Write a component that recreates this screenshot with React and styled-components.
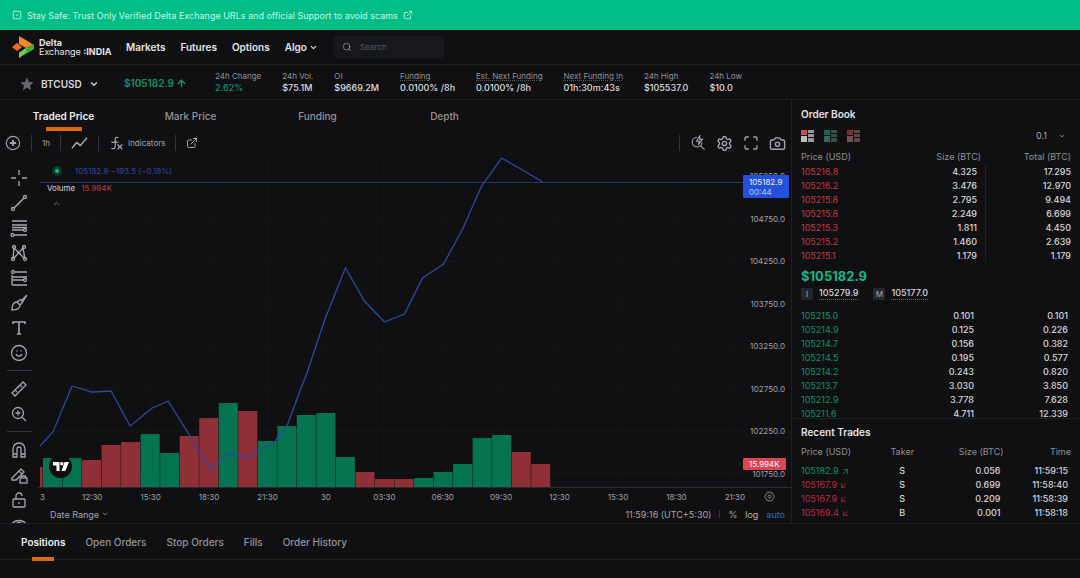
import React from "react";
import styled, { createGlobalStyle, css } from "styled-components";
import {
  ArrowDownLeft,
  ArrowUp,
  ArrowUpRight,
  Camera,
  ChevronDown,
  ChevronUp,
  ExternalLink,
  Maximize,
  Search,
  Settings,
  SquareCheck,
} from "lucide-react";

const GlobalStyle = createGlobalStyle`
  * {
    box-sizing: border-box;
  }
  body {
    margin: 0;
    background: #101013;
    color: #d6d6d8;
    font-family: Inter, "Liberation Sans", sans-serif;
    font-size: 10px;
  }
  button, input, select {
    font: inherit;
    color: inherit;
    background: none;
    border: 0;
    padding: 0;
    margin: 0;
  }
  svg {
    flex: none;
  }
`;

const line = "#1f2024";
const green = "#0a9467";
const red = "#c23a42";

const Page = styled.div`
  min-height: 100vh;
  display: flex;
  flex-direction: column;
`;

const Banner = styled.a`
  display: flex;
  align-items: center;
  gap: 5px;
  height: 30px;
  padding: 0 12px;
  background: #02bd85;
  color: #c9f5e6;
  font-size: 9px;
  text-decoration: none;
  white-space: nowrap;
`;

const Header = styled.header`
  display: flex;
  align-items: center;
  height: 35px;
  padding: 0 12px;
  border-bottom: 1px solid ${line};
`;

const Brand = styled.a`
  display: flex;
  align-items: center;
  gap: 5px;
  width: 114px;
  color: #e4e4e6;
  font-size: 9px;
  line-height: 9px;
  text-decoration: none;
  white-space: nowrap;
`;

const BrandName = styled.span`
  display: grid;
`;

const Nav = styled.nav`
  display: flex;
  align-items: center;
  gap: 15px;
`;

const NavLink = styled.a`
  display: flex;
  align-items: center;
  gap: 2px;
  color: #e4e4e6;
  font-weight: 600;
  text-decoration: none;
`;

const SearchBox = styled.label`
  display: flex;
  align-items: center;
  gap: 8px;
  width: 110px;
  height: 22px;
  margin-left: 16px;
  padding: 0 8px;
  border-radius: 2px;
  background: #17181d;
  color: #8d8e93;

  input {
    width: 100%;
    min-width: 0;
    font-size: 8px;
    outline: none;
  }
  input::placeholder {
    color: #55565c;
  }
`;

const Ticker = styled.section`
  display: flex;
  align-items: center;
  height: 35px;
  padding-left: 20px;
  border-bottom: 1px solid ${line};
  white-space: nowrap;
`;

const Symbol = styled.button`
  display: flex;
  align-items: center;
  gap: 7px;
  width: 104px;
  padding-top: 3px;
  font-weight: 600;
`;

const LastPrice = styled.div`
  display: flex;
  align-items: center;
  gap: 2px;
  width: 91px;
  padding-top: 2px;
  color: ${green};
  font-weight: 600;
`;

const Stats = styled.dl`
  display: flex;
  gap: 21px;
  margin: 0;
`;

const Stat = styled.div`
  dt {
    color: #8f9095;
    font-size: 8px;
    line-height: 11px;
    ${(props) => props.$hint && css`text-decoration: underline dotted #5b5c61;`}
  }
  dd {
    margin: 0;
    color: ${(props) => (props.$up ? green : "#dededf")};
    font-size: 9px;
    font-weight: 500;
    line-height: 12px;
  }
`;

const Main = styled.main`
  display: grid;
  grid-template-columns: minmax(0, 1fr) 289px;
  height: 424px;
  border-bottom: 1px solid ${line};
`;

const ChartPanel = styled.section`
  display: flex;
  flex-direction: column;
  min-height: 0;
`;

const Tabs = styled.div`
  display: flex;
  height: 31px;
`;

const Tab = styled.button`
  position: relative;
  width: ${(props) => (props.$fixed ? "127px" : "auto")};
  color: ${(props) => (props.$active ? "#eeeeef" : "#929398")};
  font-weight: ${(props) => (props.$active ? 600 : 500)};
  white-space: nowrap;

  ${(props) =>
    props.$active &&
    css`
      &::after {
        content: "";
        position: absolute;
        left: 50%;
        bottom: ${props.$fixed ? "0" : "-2px"};
        width: ${props.$fixed ? "36px" : "22px"};
        height: 4px;
        transform: translateX(-50%);
        background: #dc6c14;
      }
    `}
`;

const ChartBar = styled.div`
  display: flex;
  align-items: center;
  justify-content: space-between;
  height: 24px;
  padding: 0 5px;
`;

const BarGroup = styled.div`
  display: flex;
  align-items: center;
  gap: ${(props) => props.$gap};
`;

const BarButton = styled.button`
  display: flex;
  align-items: center;
  gap: 5px;
  color: #a5a6aa;
  font-size: 8px;
`;

const Divider = styled.span`
  width: 1px;
  height: ${(props) => (props.$short ? "8px" : "16px")};
  background: #34353a;
`;

const ChartBody = styled.div`
  display: flex;
  flex: 1;
  min-height: 0;
`;

const Tools = styled.div`
  display: flex;
  flex-direction: column;
  width: 38px;
  padding-top: 10px;
  overflow: hidden;
  color: #a5a6aa;
`;

const Tool = styled.button`
  display: flex;
  flex: none;
  align-items: center;
  justify-content: center;
  height: 25px;
`;

const ToolRule = styled.hr`
  flex: none;
  width: 25px;
  height: 1px;
  margin: 5px auto;
  border: 0;
  background: #37383d;
`;

const ChartArea = styled.div`
  display: flex;
  flex: 1;
  flex-direction: column;
  min-width: 0;
`;

const PlotRow = styled.div`
  position: relative;
  display: flex;
  flex: 1;
  min-height: 0;
  padding-left: 2px;
`;

const Plot = styled.svg`
  flex: 1;
  min-width: 0;
  width: 100%;
  height: 100%;
`;

const Legend = styled.div`
  position: absolute;
  top: 10px;
  left: 9px;
  display: grid;
  gap: 5px;
  font-size: 8px;
  line-height: 12px;
`;

const LegendRow = styled.div`
  display: flex;
  align-items: center;
  gap: ${(props) => props.$gap};
  padding-left: ${(props) => props.$indent || 0};
  color: ${(props) => props.$color || "#d6d6d8"};
`;

const VolumeValue = styled.span`
  color: ${red};
`;

const LiveDot = styled.span`
  width: 10px;
  height: 10px;
  border: 3px solid #0b3b2d;
  border-radius: 50%;
  background: #23b585;
`;

const TvBadge = styled.a`
  position: absolute;
  left: 11px;
  bottom: 9px;
  display: grid;
  place-items: center;
  width: 23px;
  height: 23px;
  border-radius: 50%;
  background: #0e0e11;
`;

const PriceAxis = styled.div`
  display: flex;
  flex-direction: column;
  width: 47px;
  color: #a0a1a5;
  font-size: 8px;
  line-height: 10px;
`;

const PriceMark = styled.div`
  flex: 1;
  padding: 16px 6px 0 0;
  text-align: right;

  &:last-child {
    flex: 0.7;
  }
`;

const PriceTag = styled.div`
  position: absolute;
  right: ${(props) => (props.$wide ? "2px" : "5px")};
  top: ${(props) => props.$top};
  width: ${(props) => (props.$wide ? "46px" : "43px")};
  padding: ${(props) => (props.$wide ? "2px 0 1px 6px" : "1px 0 1px 6px")};
  border-radius: 1px;
  background: ${(props) => props.$color};
  color: #f2f4ff;
  font-size: 8px;
  line-height: 10px;

  small {
    display: block;
    color: #b9c6ff;
    font-size: 8px;
  }
`;

const TimeAxis = styled.div`
  display: flex;
  align-items: center;
  height: 18px;
  border-top: 1px solid #2a2b30;
  color: #a0a1a5;
  font-size: 8px;
  text-align: center;

  span {
    flex: 1;
  }
  span:first-child {
    flex: 0 0 25px;
    padding-left: 2px;
    text-align: left;
  }
  button {
    display: flex;
    width: 27px;
  }
`;

const ChartFooter = styled.div`
  display: flex;
  align-items: center;
  justify-content: space-between;
  height: 18px;
  padding: 0 6px 0 12px;
  color: #a5a6aa;
  font-size: 9px;
`;

const FooterButton = styled.button`
  display: flex;
  align-items: center;
  gap: 2px;
  color: ${(props) => props.$color || "inherit"};
`;

const Side = styled.aside`
  display: flex;
  flex-direction: column;
  min-height: 0;
  border-left: 1px solid ${line};
`;

const Book = styled.section`
  height: 319px;
  padding: 6px 9px 0;
  overflow: hidden;
  border-bottom: 1px solid ${line};
`;

const Trades = styled.section`
  padding: 5px 9px 0;
`;

const Title = styled.h2`
  margin: 0;
  color: #e4e4e6;
  font-size: 10px;
  font-weight: 600;
  line-height: 16px;
`;

const BookTools = styled.div`
  display: flex;
  align-items: center;
  gap: 10px;
  height: 27px;

  button {
    display: flex;
  }
  select {
    width: 20px;
    appearance: none;
    font-size: 9px;
  }
  label {
    display: flex;
    align-items: center;
    gap: 2px;
    margin-left: auto;
    padding-right: 5px;
    color: #a5a6aa;
  }
`;

const Table = styled.table`
  width: 100%;
  table-layout: fixed;
  border-collapse: collapse;
  font-size: 9px;
  line-height: 14px;

  th, td {
    padding: 0;
    text-align: right;
    white-space: nowrap;
  }
  th {
    height: ${(props) => (props.$trades ? "24px" : "16px")};
    color: #8f9095;
    font-weight: 400;
  }
  th:first-child, td:first-child {
    text-align: left;
  }
  th:nth-child(2) {
    ${(props) => props.$trades && css`text-align: center;`}
  }
`;

const Row = styled.tr`
  td {
    color: #d6d6d8;
    font-weight: 500;
    ${(props) => props.$inset && css`padding-right: 3px;`}
  }
  td:first-child {
    color: ${(props) => props.$color};
    font-weight: 400;
  }
  td:nth-child(2) {
    padding-right: ${(props) => (props.$inset ? "7px" : "4px")};
    ${(props) => props.$center && css`padding-right: 0; text-align: center;`}
  }
  td:nth-child(3) {
    ${(props) =>
      props.$depth &&
      css`background: linear-gradient(#2c1a1e, #2c1a1e) 4px 0 / 1px 100% no-repeat;`}
  }
`;

const Mid = styled.div`
  height: 46px;
  padding-top: 5px;

  strong {
    display: block;
    color: #14b783;
    font-size: 13px;
    line-height: 16px;
  }
`;

const Refs = styled.div`
  display: flex;
  align-items: center;
  gap: 6px;
  padding-top: 3px;
  line-height: 12px;
  font-weight: 500;

  i {
    width: 12px;
    background: #25262b;
    color: #9c9da2;
    font-size: 8px;
    font-style: normal;
    text-align: center;
  }
  span {
    margin-right: 9px;
    border-bottom: 1px dotted #6a6b70;
  }
`;

const TradePrice = styled.span`
  display: flex;
  align-items: center;
  gap: 2px;
`;

const BottomTabs = styled.div`
  display: flex;
  gap: 20px;
  height: 36px;
  padding-left: 21px;
  border-bottom: 1px solid ${line};
`;

const navItems = ["Markets", "Futures", "Options"];

const stats = [
  { label: "24h Change", value: "2.62%", up: true },
  { label: "24h Vol.", value: "$75.1M" },
  { label: "OI", value: "$9669.2M" },
  { label: "Funding", value: "0.0100% /8h", hint: true },
  { label: "Est. Next Funding", value: "0.0100% /8h", hint: true },
  { label: "Next Funding In", value: "01h:30m:43s", hint: true },
  { label: "24h High", value: "$105537.0" },
  { label: "24h Low", value: "$10.0" },
];

const chartTabs = ["Traded Price", "Mark Price", "Funding", "Depth"];

const priceMarks = [
  "105250.0", "104750.0", "104250.0", "103750.0",
  "103250.0", "102750.0", "102250.0", "101750.0",
];

const timeMarks = [
  "3", "12:30", "15:30", "18:30", "21:30", "30", "03:30",
  "06:30", "09:30", "12:30", "15:30", "18:30", "21:30",
];

// volume of each hour: bar height, and whether the price went up
const volumes = [
  [20, 0], [29, 1], [29, 1], [27, 0], [42, 0], [45, 0], [53, 1], [34, 1], [51, 0],
  [69, 0], [84, 1], [76, 0], [46, 1], [61, 1], [72, 1], [74, 1], [30, 1], [15, 0],
  [8, 0], [8, 0], [9, 1], [15, 1], [23, 1], [49, 1], [52, 1], [35, 0], [23, 0],
];

const pricePath =
  "0,291 13,277 32,231 52,237 71,236 90,271 112,253 128,246 151,283 170,314 188,298 " +
  "207,302 235,286 247,270 260,235 267,217 285,163 305,113 324,146 344,167 364,159 " +
  "382,123 403,109 422,74 441,31 461,3 480,14 502,27";

const asks = [
  ["105216.8", "4.325", "17.295"],
  ["105216.2", "3.476", "12.970"],
  ["105215.8", "2.795", "9.494"],
  ["105215.8", "2.249", "6.699"],
  ["105215.3", "1.811", "4.450"],
  ["105215.2", "1.460", "2.639"],
  ["105215.1", "1.179", "1.179"],
];

const bids = [
  ["105215.0", "0.101", "0.101"],
  ["105214.9", "0.125", "0.226"],
  ["105214.7", "0.156", "0.382"],
  ["105214.5", "0.195", "0.577"],
  ["105214.2", "0.243", "0.820"],
  ["105213.7", "3.030", "3.850"],
  ["105212.9", "3.778", "7.628"],
  ["105211.6", "4.711", "12.339"],
];

const trades = [
  { price: "105182.9", taker: "S", size: "0.056", time: "11:59:15", up: true },
  { price: "105167.9", taker: "S", size: "0.699", time: "11:58:40" },
  { price: "105167.9", taker: "S", size: "0.209", time: "11:58:39" },
  { price: "105169.4", taker: "B", size: "0.001", time: "11:58:18" },
];

const bottomTabs = ["Positions", "Open Orders", "Stop Orders", "Fills", "Order History"];

const Stroke = ({ size = 18, children }) => (
  <svg width={size} height={size} viewBox="0 0 18 18" fill="none" stroke="currentColor" strokeWidth="1.3">
    {children}
  </svg>
);

const Logo = () => (
  <svg width="22" height="22" viewBox="0 0 22 22">
    <path d="M7 0 22 9l-8 3-7-4Z" fill="#ef8a25" />
    <path d="m0 11 5-4 5 4-5 4Z" fill="#f26a21" />
    <path d="M22 9v4L7 22v-5l7-5Z" fill="#35b13f" />
    <path d="M7 17l7-5v4l-7 6Z" fill="#7ccb3f" />
  </svg>
);

const tools = [
  { name: "Crosshair", icon: <path d="M9 1v5M9 12v5M1 9h5M12 9h5" /> },
  { name: "Trend line", icon: <><path d="M4 14 14 4" strokeWidth="1.6" /><circle cx="3" cy="15" r="1.5" /><circle cx="15" cy="3" r="1.5" /></> },
  { name: "Fib retracement", icon: <><path d="M2 2h15M2 6h15M2 11h11M4 16h13M2 8.5h15" /><circle cx="15" cy="11" r="1.5" /><circle cx="2.5" cy="16" r="1.5" /></> },
  { name: "Pattern", icon: <><path d="M3 15 4 4l10 10M4 14l9-10 2 11M7 8l4 2" /><circle cx="3" cy="15" r="1.5" /><circle cx="4" cy="3" r="1.5" /><circle cx="14" cy="3" r="1.5" /><circle cx="15" cy="15" r="1.5" /></> },
  { name: "Forecast", icon: <><path d="M5 3h12M2 8h15M2 11h12M2 16h15M2 6v10" /><circle cx="3" cy="3" r="1.5" /><circle cx="15" cy="11" r="1.5" /></> },
  { name: "Brush", icon: <path d="M2 16c0-5 1-8 5-8l3 3c0 4-3 5-8 5ZM7 8l3-2h2v3l-2 2M12 6l5-5M12 9l5-8" /> },
  { name: "Text", icon: <path d="M3 5V3h12v2M9 3v12M7 15h4" strokeWidth="1.6" /> },
  { name: "Icons", icon: <><circle cx="9" cy="9" r="7.5" /><path d="M6 10c1 3 5 3 6 0M6.500 7h1M10.500 7h1" /></> },
  null,
  { name: "Measure", icon: <path d="M2 13 13 2l3 3L5 16ZM5 10l2 2M8 7l1 1M10 5l2 2" /> },
  { name: "Zoom in", icon: <><circle cx="8" cy="8" r="5.5" /><path d="m12 12 4 4M8 5.500v5M5.500 8h5" /></> },
  null,
  { name: "Magnet", icon: <path d="M3 16V8a6 6 0 0 1 12 0v8h-4V8a2 2 0 0 0-4 0v8ZM3 13h4M11 13h4" /> },
  { name: "Stay in drawing mode", icon: <><path d="M2 12 11 3l3 3-8 8H2ZM9 5l3 3" /><rect x="10" y="12" width="7" height="5" /><path d="M11.500 12v-2h4v2" /></> },
  { name: "Lock drawings", icon: <><rect x="3" y="8" width="12" height="8" rx="1" /><path d="M6 8V5a3 3 0 0 1 6 0M9 11v2" /></> },
  { name: "Hide drawings", icon: <><path d="M1 9c4-6 12-6 16 0-4 6-12 6-16 0Z" /><circle cx="9" cy="9" r="2.5" /></> },
];

const BookIcon = ({ left, right }) => (
  <svg width="13" height="12" viewBox="0 0 13 12">
    <path d="M0 0h6v5H0Z" fill={left} />
    <path d="M0 6h6v6H0Z" fill={right} />
    <path d="M7 0h6v3H7ZM7 4h6v3H7ZM7 8h6v4H7Z" fill={right} opacity=".8" />
  </svg>
);

const Chart = () => (
  <Plot viewBox="0 0 703 332" preserveAspectRatio="none" role="img" aria-label="BTCUSD price and volume">
    <g stroke="#151619">
      {[64, 106, 149, 191, 233, 276, 318].map((y) => (
        <path key={y} d={`M0 ${y}H703`} />
      ))}
      {[52, 110, 168, 227, 285, 343, 402, 460, 518, 577, 635, 694].map((x) => (
        <path key={x} d={`M${x} 0V332`} />
      ))}
    </g>
    {volumes.map(([height, up], i) => (
      <rect
        key={i}
        x={Math.max(0, i * 19.5 - 16.5)}
        y={332 - height}
        width={i === 0 ? 2.5 : 19}
        height={height}
        fill={up ? "#04734f" : "#8f2f37"}
      />
    ))}
    <path d="M0 27.500H703" stroke="#20307a" />
    <polyline points={pricePath} fill="none" stroke="#3047a0" strokeWidth="1.3" />
  </Plot>
);

const OrderBook = () => (
  <Book>
    <Title>Order Book</Title>
    <BookTools>
      <button aria-label="Asks and bids"><BookIcon left="#cf4a50" right="#b9bcbb" /></button>
      <button aria-label="Bids only"><BookIcon left="#0e6b4f" right="#3d6458" /></button>
      <button aria-label="Asks only"><BookIcon left="#7e2c38" right="#70525a" /></button>
      <label>
        <select aria-label="Price step" defaultValue="0.1">
          <option>0.1</option>
        </select>
        <ChevronDown size={8} />
      </label>
    </BookTools>
    <Table>
      <thead>
        <tr>
          <th>Price (USD)</th>
          <th>Size (BTC)</th>
          <th>Total (BTC)</th>
        </tr>
      </thead>
      <tbody>
        {asks.map(([price, size, total]) => (
          <Row key={size} $color={red} $depth>
            <td>{price}</td>
            <td>{size}</td>
            <td>{total}</td>
          </Row>
        ))}
        <tr>
          <td colSpan={3}>
            <Mid>
              <strong>$105182.9</strong>
              <Refs>
                <i>I</i>
                <span>105279.9</span>
                <i>M</i>
                <span>105177.0</span>
              </Refs>
            </Mid>
          </td>
        </tr>
        {bids.map(([price, size, total]) => (
          <Row key={price} $color={green} $inset>
            <td>{price}</td>
            <td>{size}</td>
            <td>{total}</td>
          </Row>
        ))}
      </tbody>
    </Table>
  </Book>
);

const RecentTrades = () => (
  <Trades>
    <Title>Recent Trades</Title>
    <Table $trades>
      <thead>
        <tr>
          <th>Price (USD)</th>
          <th>Taker</th>
          <th>Size (BTC)</th>
          <th>Time</th>
        </tr>
      </thead>
      <tbody>
        {trades.map((trade) => (
          <Row key={trade.time} $color={trade.up ? green : "#bd2a48"} $center $inset>
            <td>
              <TradePrice>
                {trade.price}
                {trade.up ? <ArrowUpRight size={9} /> : <ArrowDownLeft size={9} />}
              </TradePrice>
            </td>
            <td>{trade.taker}</td>
            <td>{trade.size}</td>
            <td>{trade.time}</td>
          </Row>
        ))}
      </tbody>
    </Table>
  </Trades>
);

const App = () => (
  <Page>
    <GlobalStyle />
    <Banner href="#safety">
      <SquareCheck size={10} />
      Stay Safe: Trust Only Verified Delta Exchange URLs and official Support to avoid scams
      <ExternalLink size={10} />
    </Banner>

    <Header>
      <Brand href="#home">
        <Logo />
        <BrandName>
          <b>Delta</b>
          <span>Exchange <b>:INDIA</b></span>
        </BrandName>
      </Brand>
      <Nav>
        {navItems.map((item) => (
          <NavLink key={item} href={`#${item.toLowerCase()}`}>{item}</NavLink>
        ))}
        <NavLink href="#algo">
          Algo <ChevronDown size={9} strokeWidth={3} />
        </NavLink>
      </Nav>
      <SearchBox>
        <Search size={10} />
        <input type="search" placeholder="Search" aria-label="Search" />
      </SearchBox>
    </Header>

    <Ticker>
      <Symbol>
        <svg width="14" height="14" viewBox="0 0 24 24" fill="#66676c">
          <path d="m12 1 3.300 7.400 8 .8-6 5.400 1.700 7.900-7-4-7 4 1.700-7.900-6-5.400 8-.8Z" />
        </svg>
        BTCUSD
        <ChevronDown size={10} strokeWidth={3} />
      </Symbol>
      <LastPrice>
        $105182.9 <ArrowUp size={11} strokeWidth={3} />
      </LastPrice>
      <Stats>
        {stats.map((stat) => (
          <Stat key={stat.label} $up={stat.up} $hint={stat.hint}>
            <dt>{stat.label}</dt>
            <dd>{stat.value}</dd>
          </Stat>
        ))}
      </Stats>
    </Ticker>

    <Main>
      <ChartPanel>
        <Tabs>
          {chartTabs.map((tab, i) => (
            <Tab key={tab} $fixed $active={i === 0}>{tab}</Tab>
          ))}
        </Tabs>
        <ChartBar>
          <BarGroup $gap="10px">
            <BarButton aria-label="Compare">
              <Stroke size={16}><circle cx="9" cy="9" r="7.5" /><path d="M9 5.500v7M5.500 9h7" strokeWidth="2" /></Stroke>
            </BarButton>
            <Divider />
            <BarButton>1h</BarButton>
            <Divider />
            <BarButton aria-label="Line chart">
              <Stroke size={17}><path d="m1 14 5-6 4 3 7-8" strokeWidth="1.6" /></Stroke>
            </BarButton>
            <Divider />
            <BarButton>
              <Stroke size={14}><path d="M12 2c-3-1-4 0-4 3v8c0 3-2 4-5 3M3 8h9M11 11l6 6M17 11l-6 6" strokeWidth="1.6" /></Stroke>
              Indicators
            </BarButton>
            <Divider />
            <BarButton aria-label="Open in new window"><ExternalLink size={12} /></BarButton>
          </BarGroup>
          <BarGroup $gap="10px">
            <Divider />
            <BarButton aria-label="Quick search">
              <Stroke size={16}><path d="M8 2.500a5.500 5.500 0 1 0 5.500 6M11.500 12l5 4.500M11 1 7.500 7h3l-1 4L14 5h-3Z" /></Stroke>
            </BarButton>
            <BarButton aria-label="Chart settings"><Settings size={17} /></BarButton>
            <BarButton aria-label="Fullscreen"><Maximize size={16} /></BarButton>
            <BarButton aria-label="Snapshot"><Camera size={17} /></BarButton>
          </BarGroup>
        </ChartBar>
        <ChartBody>
          <Tools>
            {tools.map((tool, i) =>
              tool ? (
                <Tool key={tool.name} aria-label={tool.name}>
                  <Stroke>{tool.icon}</Stroke>
                </Tool>
              ) : (
                <ToolRule key={i} />
              )
            )}
          </Tools>
          <ChartArea>
            <PlotRow>
              <Chart />
              <PriceAxis>
                {priceMarks.map((mark) => (
                  <PriceMark key={mark}>{mark}</PriceMark>
                ))}
              </PriceAxis>
              <Legend>
                <LegendRow $gap="13px" $indent="5px" $color="#2b47a8">
                  <LiveDot /> 105182.9 −193.5 (−0.18%)
                </LegendRow>
                <LegendRow $gap="6px">
                  Volume <VolumeValue>15.994K</VolumeValue>
                </LegendRow>
                <LegendRow $indent="5px" $color="#8f9095">
                  <ChevronUp size={9} />
                </LegendRow>
              </Legend>
              <PriceTag $wide $top="20px" $color="#2450dc">
                105182.9
                <small>00:44</small>
              </PriceTag>
              <PriceTag $top="303px" $color="#d94550">15.994K</PriceTag>
              <TvBadge href="#tradingview" aria-label="TradingView">
                <svg width="16" height="10" viewBox="0 0 16 10" fill="#fff">
                  <path d="M0 0h6.500v9H3.500V3.500H0Z" />
                  <circle cx="8.8" cy="1.8" r="1.7" />
                  <path d="M11.500 0H16l-3.700 9H8.500Z" />
                </svg>
              </TvBadge>
            </PlotRow>
            <TimeAxis>
              {timeMarks.map((mark, i) => (
                <span key={i}>{mark}</span>
              ))}
              <button aria-label="Axis settings">
                <Stroke size={11}><path d="M5.500 2h7L17 9l-4.500 7h-7L1 9Z" /><circle cx="9" cy="9" r="2.5" /></Stroke>
              </button>
            </TimeAxis>
            <ChartFooter>
              <FooterButton>Date Range <ChevronDown size={8} /></FooterButton>
              <BarGroup $gap="8px">
                <span>11:59:16 (UTC+5:30)</span>
                <Divider $short />
                <FooterButton>%</FooterButton>
                <FooterButton $color="#c0b3a4">log</FooterButton>
                <FooterButton $color="#286fc0">auto</FooterButton>
              </BarGroup>
            </ChartFooter>
          </ChartArea>
        </ChartBody>
      </ChartPanel>
      <Side>
        <OrderBook />
        <RecentTrades />
      </Side>
    </Main>

    <BottomTabs>
      {bottomTabs.map((tab, i) => (
        <Tab key={tab} $active={i === 0}>{tab}</Tab>
      ))}
    </BottomTabs>
  </Page>
);

export default App;
